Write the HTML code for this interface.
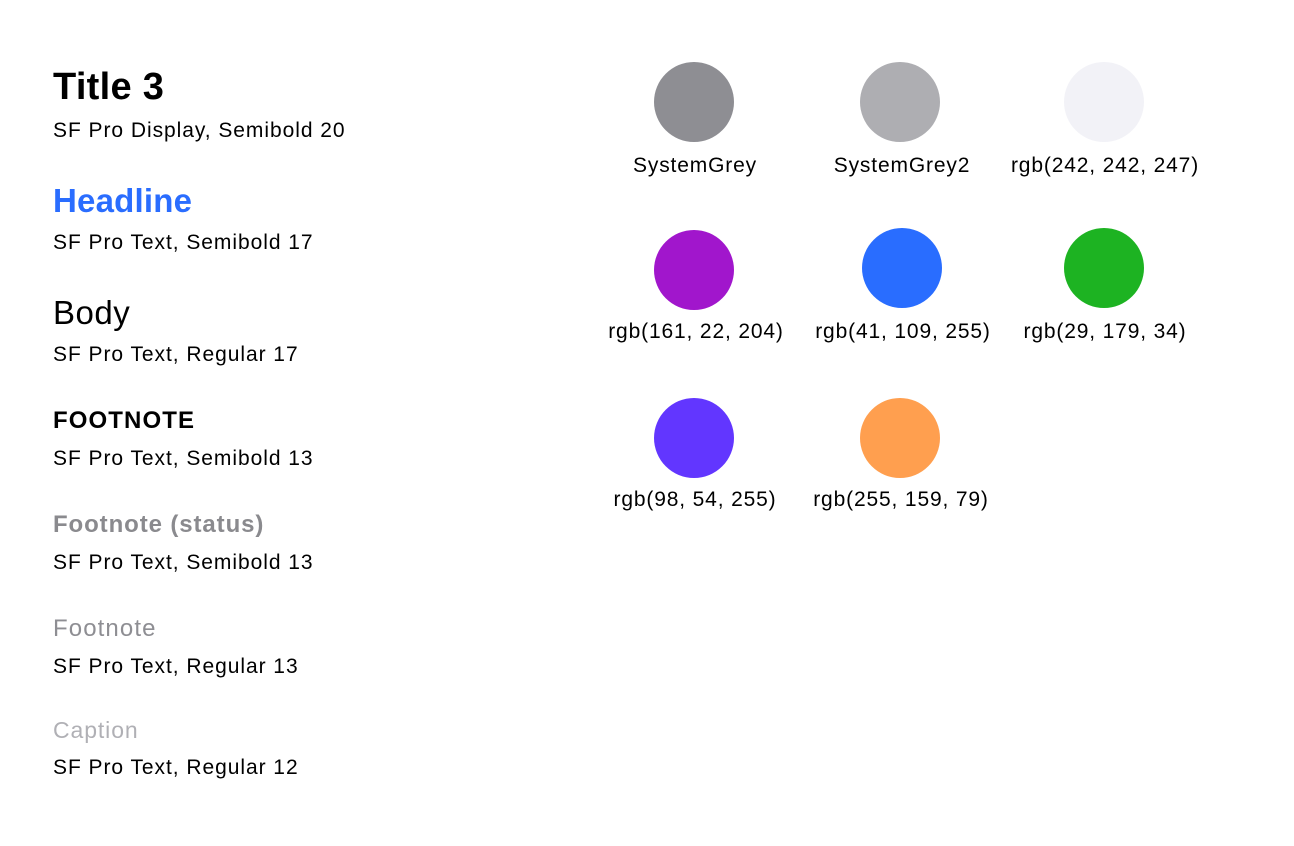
<!DOCTYPE html>
<html><head><meta charset="utf-8"><style>
html,body{margin:0;padding:0;background:#fff;width:1294px;height:846px;overflow:hidden;font-family:"Liberation Sans",sans-serif;}
.t{position:absolute;left:53px;white-space:nowrap;line-height:1;}
.s{font-size:21px;color:#000;letter-spacing:0.95px;}
.c{position:absolute;width:80px;height:80px;border-radius:50%;}
.l{position:absolute;width:240px;text-align:center;font-size:21px;line-height:1;white-space:nowrap;color:#000;letter-spacing:0.85px;}
</style></head><body>
<div class="t" style="top:68px;font-size:38px;font-weight:bold;letter-spacing:0.3px;">Title 3</div>
<div class="t s" style="top:120px;">SF Pro Display, Semibold 20</div>
<div class="t" style="top:184px;font-size:33px;font-weight:bold;color:#2a6dff;letter-spacing:0.2px;">Headline</div>
<div class="t s" style="top:232px;">SF Pro Text, Semibold 17</div>
<div class="t" style="top:296px;font-size:33px;letter-spacing:0.5px;">Body</div>
<div class="t s" style="top:344px;">SF Pro Text, Regular 17</div>
<div class="t" style="top:409px;font-size:24px;font-weight:bold;letter-spacing:1.1px;">FOOTNOTE</div>
<div class="t s" style="top:448px;">SF Pro Text, Semibold 13</div>
<div class="t" style="top:513px;font-size:24px;font-weight:bold;color:#8a8a8e;letter-spacing:0.9px;">Footnote (status)</div>
<div class="t s" style="top:552px;">SF Pro Text, Semibold 13</div>
<div class="t" style="top:617px;font-size:24px;color:#8e8e93;letter-spacing:1.1px;">Footnote</div>
<div class="t s" style="top:656px;">SF Pro Text, Regular 13</div>
<div class="t" style="top:719px;font-size:23px;color:#b0b0b5;letter-spacing:0.9px;">Caption</div>
<div class="t s" style="top:757px;">SF Pro Text, Regular 12</div>

<div class="c" style="left:654px;top:62px;background:#8e8e93;"></div>
<div class="c" style="left:860px;top:62px;background:#aeaeb2;"></div>
<div class="c" style="left:1064px;top:62px;background:#f2f2f7;"></div>
<div class="l" style="left:575px;top:155px;">SystemGrey</div>
<div class="l" style="left:782px;top:155px;">SystemGrey2</div>
<div class="l" style="left:985px;top:155px;">rgb(242, 242, 247)</div>

<div class="c" style="left:654px;top:230px;background:rgb(161,22,204);"></div>
<div class="c" style="left:862px;top:228px;background:rgb(41,109,255);"></div>
<div class="c" style="left:1064px;top:228px;background:rgb(29,179,34);"></div>
<div class="l" style="left:576px;top:321px;">rgb(161, 22, 204)</div>
<div class="l" style="left:783px;top:321px;">rgb(41, 109, 255)</div>
<div class="l" style="left:985px;top:321px;">rgb(29, 179, 34)</div>

<div class="c" style="left:654px;top:398px;background:rgb(98,54,255);"></div>
<div class="c" style="left:860px;top:398px;background:rgb(255,159,79);"></div>
<div class="l" style="left:575px;top:489px;">rgb(98, 54, 255)</div>
<div class="l" style="left:781px;top:489px;">rgb(255, 159, 79)</div>
</body></html>
